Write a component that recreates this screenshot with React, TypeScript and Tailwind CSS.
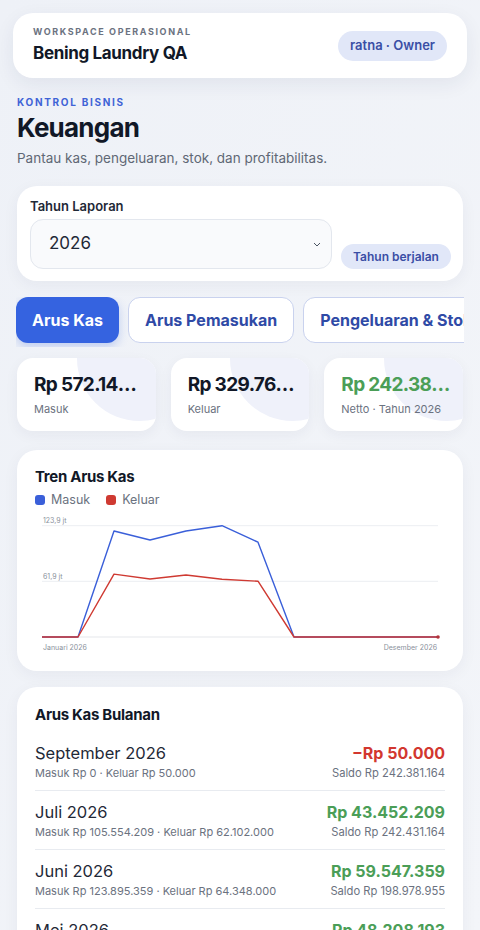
import React from 'react';

const masuk = [0, 0, 118, 108, 118, 123.9, 105.55, 0, 0, 0, 0, 0];
const keluar = [0, 0, 70, 64.6, 69, 64.35, 62.1, 0, 0.05, 0, 0, 0];

const toPoints = (data: number[]) =>
  data.map((v, i) => `${7 + i * 36},${(127 - v * 0.898).toFixed(1)}`).join(' ');

const rows = [
  { month: 'September 2026', sub: 'Masuk Rp 0 · Keluar Rp 50.000', net: '−Rp 50.000', saldo: 'Saldo Rp 242.381.164', neg: true },
  { month: 'Juli 2026', sub: 'Masuk Rp 105.554.209 · Keluar Rp 62.102.000', net: 'Rp 43.452.209', saldo: 'Saldo Rp 242.431.164', neg: false },
  { month: 'Juni 2026', sub: 'Masuk Rp 123.895.359 · Keluar Rp 64.348.000', net: 'Rp 59.547.359', saldo: 'Saldo Rp 198.978.955', neg: false },
  { month: 'Mei 2026', sub: 'Masuk Rp 118.208.193 · Keluar Rp 70.000.000', net: 'Rp 48.208.193', saldo: 'Saldo Rp 139.431.596', neg: false },
];

const stats = [
  { value: 'Rp 572.145.761', label: 'Masuk', green: false },
  { value: 'Rp 329.764.597', label: 'Keluar', green: false },
  { value: 'Rp 242.381.164', label: 'Netto · Tahun 2026', green: true },
];

function TrendChart() {
  return (
    <svg width="410" height="150" viewBox="0 0 410 150" className="block">
      <line x1="7" y1="15.7" x2="403" y2="15.7" stroke="#eceef2" strokeWidth="1" />
      <line x1="7" y1="71.3" x2="403" y2="71.3" stroke="#eceef2" strokeWidth="1" />
      <line x1="7" y1="127" x2="403" y2="127" stroke="#e5e7eb" strokeWidth="1" />
      <text x="8" y="13" fontSize="7" fill="#8a919c" fontFamily="Inter, sans-serif">123,9 jt</text>
      <text x="8" y="68.5" fontSize="7" fill="#8a919c" fontFamily="Inter, sans-serif">61,9 jt</text>
      <polyline points={toPoints(masuk)} fill="none" stroke="#3a5fd9" strokeWidth="1.4" strokeLinejoin="round" />
      <polyline points={toPoints(keluar)} fill="none" stroke="#cf3a32" strokeWidth="1.4" strokeLinejoin="round" />
      <circle cx="403" cy="127" r="1.8" fill="#b2333a" />
      <text x="8" y="139.5" fontSize="7" fill="#8a919c" fontFamily="Inter, sans-serif">Januari 2026</text>
      <text x="402" y="139.5" fontSize="7" fill="#8a919c" textAnchor="end" fontFamily="Inter, sans-serif">Desember 2026</text>
    </svg>
  );
}

export default function App() {
  return (
    <div className="w-[480px] h-[930px] overflow-hidden bg-gradient-to-br from-[#eef1f7] to-[#f3f5f9] font-['Inter','Noto_Sans',sans-serif] text-[#111827]">
      {/* Header */}
      <div className="px-[13px] pt-[13px]">
        <div className="h-[65px] bg-white rounded-[20px] shadow-[0_6px_20px_rgba(30,41,80,0.07)] px-5 flex items-center justify-between">
          <div>
            <div className="text-[9px] font-bold tracking-[0.18em] text-[#6b7280] leading-3">WORKSPACE OPERASIONAL</div>
            <div className="text-[17px] font-bold tracking-[-0.02em] text-[#111827] leading-6 mt-[3px]">Bening Laundry QA</div>
          </div>
          <div className="h-[30px] px-[12px] rounded-full bg-[#e1e7f8] text-[#3a4ea5] text-[13px] font-semibold flex items-center">ratna · Owner</div>
        </div>
      </div>

      <div className="px-[17px]">
        {/* Title */}
        <div className="pt-[18px]">
          <div className="text-[10px] font-bold tracking-[0.17em] text-[#3f63d6] leading-3">KONTROL BISNIS</div>
          <h1 className="text-[26px] font-bold tracking-[-0.03em] leading-8 mt-[4px]">Keuangan</h1>
          <p className="text-[13.5px] text-[#5f6875] leading-5 mt-[4px]">Pantau kas, pengeluaran, stok, dan profitabilitas.</p>
        </div>

        {/* Filter */}
        <div className="mt-[18px] bg-white rounded-[20px] shadow-[0_4px_16px_rgba(30,41,80,0.05)] pl-[13px] pr-[12px] pt-[12px] pb-[12px]">
          <div className="text-[13px] font-semibold text-[#1f2937] leading-4">Tahun Laporan</div>
          <div className="flex items-end gap-[9px] mt-[5px]">
            <div className="flex-1 h-[50px] rounded-[13px] border border-[#e3e7ee] bg-[#f9fafc] flex items-center justify-between pl-[18px] pr-[10px]">
              <span className="text-[17px] text-[#1f2937]">2026</span>
              <svg width="8" height="5" viewBox="0 0 8 5">
                <path d="M1 1l3 3 3-3" fill="none" stroke="#4b5563" strokeWidth="1" />
              </svg>
            </div>
            <div className="h-[25px] w-[110px] rounded-full bg-[#e1e7f8] text-[#3a4ea5] text-[12px] font-semibold flex items-center justify-center">Tahun berjalan</div>
          </div>
        </div>
      </div>

      {/* Tabs */}
      <div className="mx-[16px] mt-[16px] overflow-hidden">
        <div className="flex gap-[9px] w-max pb-[4px]">
          <div className="h-[46px] px-[16px] rounded-[12px] bg-[#3563e0] text-white text-[16px] font-bold flex items-center shadow-[0_4px_10px_rgba(53,99,224,0.25)]">Arus Kas</div>
          <div className="h-[46px] px-[16px] rounded-[12px] bg-white border-[1.5px] border-[#c9d2ee] text-[#2f4aa6] text-[16px] font-bold flex items-center">Arus Pemasukan</div>
          <div className="h-[46px] px-[16px] rounded-[12px] bg-white border-[1.5px] border-[#c9d2ee] text-[#2f4aa6] text-[16px] font-bold flex items-center">Pengeluaran &amp; Stok</div>
        </div>
      </div>

      <div className="px-[17px]">
        {/* Stats */}
        <div className="grid grid-cols-3 gap-[15px] mt-[11px]">
          {stats.map((s) => (
            <div key={s.label} className="relative h-[73px] bg-white rounded-[16px] overflow-hidden shadow-[0_4px_14px_rgba(30,41,80,0.05)]">
              <div className="absolute -right-[46px] -top-[62px] w-[125px] h-[125px] rounded-full bg-[#eff1fa]" />
              <div className="relative pl-[17px] pr-[10px] pt-[15px]">
                <div className={`text-[19px] font-bold tracking-[-0.035em] leading-6 truncate ${s.green ? 'text-[#4b9e57]' : 'text-[#111827]'}`}>{s.value}</div>
                <div className="text-[11px] text-[#6b7280] leading-4 mt-[4px]">{s.label}</div>
              </div>
            </div>
          ))}
        </div>

        {/* Chart */}
        <div className="mt-[19px] h-[221px] bg-white rounded-[20px] shadow-[0_4px_16px_rgba(30,41,80,0.05)] px-[18px] pt-[17px]">
          <div className="text-[15px] font-bold tracking-[-0.02em] leading-5">Tren Arus Kas</div>
          <div className="flex items-center gap-[6px] mt-[3px] text-[12.5px] text-[#6b7280] leading-5">
            <span className="w-[10px] h-[10px] rounded-[3px] bg-[#3a5fd9]" />
            <span className="mr-[10px]">Masuk</span>
            <span className="w-[10px] h-[10px] rounded-[3px] bg-[#cf3a32]" />
            <span>Keluar</span>
          </div>
          <TrendChart />
        </div>

        {/* Monthly list */}
        <div className="mt-[16px] bg-white rounded-[20px] shadow-[0_4px_16px_rgba(30,41,80,0.05)] px-[18px] pt-[18px] pb-4">
          <div className="text-[15px] font-bold tracking-[-0.02em] leading-5">Arus Kas Bulanan</div>
          <div className="mt-[17px]">
            {rows.map((r) => (
              <div key={r.month} className="flex justify-between items-start border-b border-[#e8ebf0] pt-[10px] pb-[9px] first:pt-0">
                <div>
                  <div className="text-[16.5px] text-[#1f2937] leading-[22px]">{r.month}</div>
                  <div className="text-[11px] text-[#6b7280] leading-4 mt-[1px]">{r.sub}</div>
                </div>
                <div className="text-right">
                  <div className={`text-[16px] font-bold leading-[22px] ${r.neg ? 'text-[#d2372f]' : 'text-[#4b9e57]'}`}>{r.net}</div>
                  <div className="text-[11.2px] text-[#6b7280] leading-4 mt-[1px]">{r.saldo}</div>
                </div>
              </div>
            ))}
          </div>
        </div>
      </div>
    </div>
  );
}
